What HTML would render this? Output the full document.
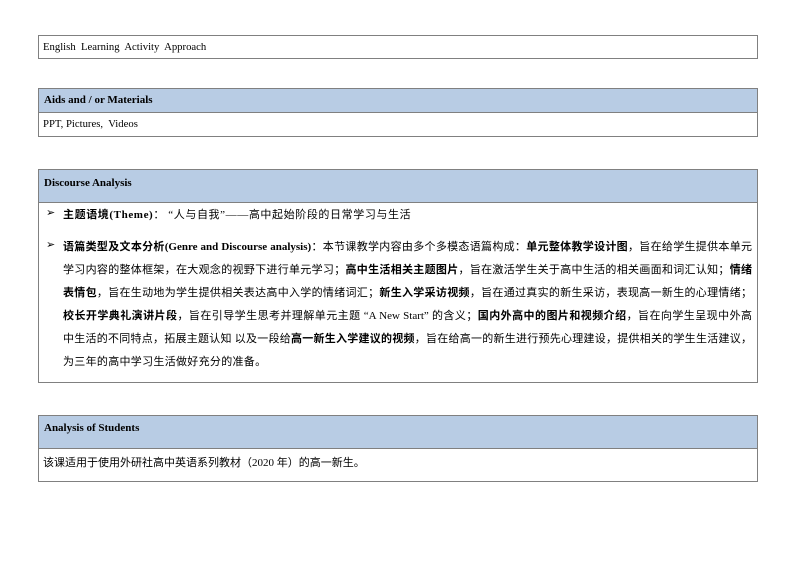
<!DOCTYPE html>
<html><head><meta charset="utf-8"><style>
body{margin:0;width:794px;height:561px;background:#fff;position:relative;overflow:hidden;font-family:"Liberation Serif","Noto Sans CJK SC",serif;color:#000}
.box{position:absolute;left:38px;width:720px;border:1px solid #808080;box-sizing:border-box}
.hd{background:#b8cce4;border-bottom:1px solid #808080;font-weight:bold;font-size:11px;padding-left:5px;box-sizing:border-box}
.t{position:absolute;font-size:10.7px;white-space:nowrap}
.c{position:absolute;font-size:11px;white-space:nowrap;font-family:"Liberation Serif","Noto Sans CJK SC",sans-serif}
.j{width:689px;white-space:normal;text-align:justify;text-align-last:justify;height:16px;overflow:hidden}
</style></head><body>
<div class="box" style="top:35px;height:24px"></div>
<div class="t" style="left:43px;top:41px">English&nbsp; Learning&nbsp; Activity&nbsp; Approach</div>

<div class="box" style="top:88px;height:49px"><div class="hd" style="height:24px;line-height:23px">Aids and / or Materials</div></div>
<div class="t" style="left:43px;top:118px">PPT, Pictures,&nbsp; Videos</div>

<div class="box" style="top:169px;height:214px"><div class="hd" style="height:33px;line-height:26px">Discourse Analysis</div></div>
<div class="c" style="left:46px;top:206px;font-size:11px">&#x27A2;</div>
<div class="c" style="left:63px;top:206px;letter-spacing:0.6px"><b>主题语境(Theme)</b>：&nbsp;“人与自我”——高中起始阶段的日常学习与生活</div>
<div class="c" style="left:46px;top:238px;font-size:11px">&#x27A2;</div>
<div class="c j" style="left:63px;top:238px"><b>语篇类型及文本分析(Genre and Discourse analysis)</b>：本节课教学内容由多个多模态语篇构成：<b>单元整体教学设计图</b>，旨在给学生提供本单元</div>
<div class="c j" style="left:63px;top:261px">学习内容的整体框架，在大观念的视野下进行单元学习；<b>高中生活相关主题图片</b>，旨在激活学生关于高中生活的相关画面和词汇认知；<b>情绪</b></div>
<div class="c j" style="left:63px;top:284px"><b>表情包</b>，旨在生动地为学生提供相关表达高中入学的情绪词汇；<b>新生入学采访视频</b>，旨在通过真实的新生采访，表现高一新生的心理情绪；</div>
<div class="c j" style="left:63px;top:307px"><b>校长开学典礼演讲片段</b>，旨在引导学生思考并理解单元主题 “A New Start” 的含义；<b>国内外高中的图片和视频介绍</b>，旨在向学生呈现中外高</div>
<div class="c j" style="left:63px;top:330px">中生活的不同特点，拓展主题认知 以及一段给<b>高一新生入学建议的视频</b>，旨在给高一的新生进行预先心理建设，提供相关的学生生活建议，</div>
<div class="c" style="left:63px;top:353px;letter-spacing:0.3px">为三年的高中学习生活做好充分的准备。</div>

<div class="box" style="top:415px;height:67px"><div class="hd" style="height:33px;line-height:24px">Analysis of Students</div></div>
<div class="c" style="left:43px;top:454px">该课适用于使用外研社高中英语系列教材（2020 年）的高一新生。</div>
</body></html>
